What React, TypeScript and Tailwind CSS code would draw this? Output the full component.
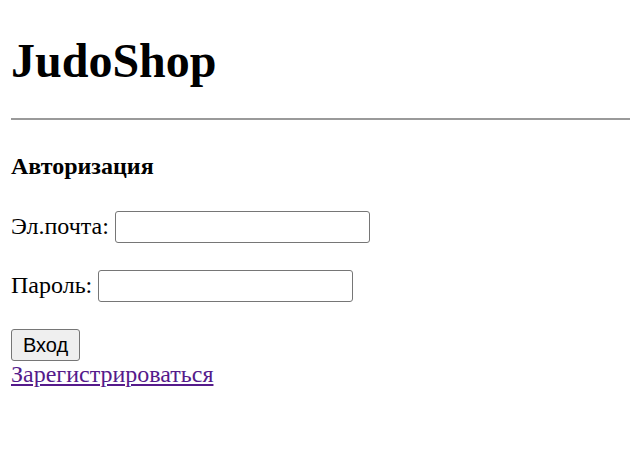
export default function App() {
  return (
    <div className="min-h-[470px] bg-white pl-[11px] font-['Liberation_Serif',serif] text-[24px] leading-[1.15] text-black">
      <h1 className="pt-[33px] text-[48px] font-bold leading-[1.15]">JudoShop</h1>
      <hr className="mt-[30px] h-[2px] border-0 bg-[#9a9a9a]" />
      <h4 className="mt-[33px] text-[24px] font-bold">Авторизация</h4>
      <form className="flex flex-col" onSubmit={(e) => e.preventDefault()}>
        <label className="mt-[30px] flex items-center gap-[6px]">
          <span>Эл.почта:</span>
          <input
            type="email"
            className="h-[32px] w-[255px] rounded-[3px] border border-[#767676] bg-white px-1"
          />
        </label>
        <label className="mt-[27px] flex items-center gap-[6px]">
          <span>Пароль:</span>
          <input
            type="password"
            className="h-[32px] w-[255px] rounded-[3px] border border-[#767676] bg-white px-1"
          />
        </label>
        <div className="mt-[27px]">
          <button
            type="submit"
            className="h-[32px] w-[69px] rounded-[3px] border border-[#767676] bg-[#efefef] font-['Liberation_Sans',sans-serif] text-[20px] leading-none"
          >
            Вход
          </button>
        </div>
      </form>
      <a href="#" className="text-[#551a8b] underline">
        Зарегистрироваться
      </a>
    </div>
  );
}
